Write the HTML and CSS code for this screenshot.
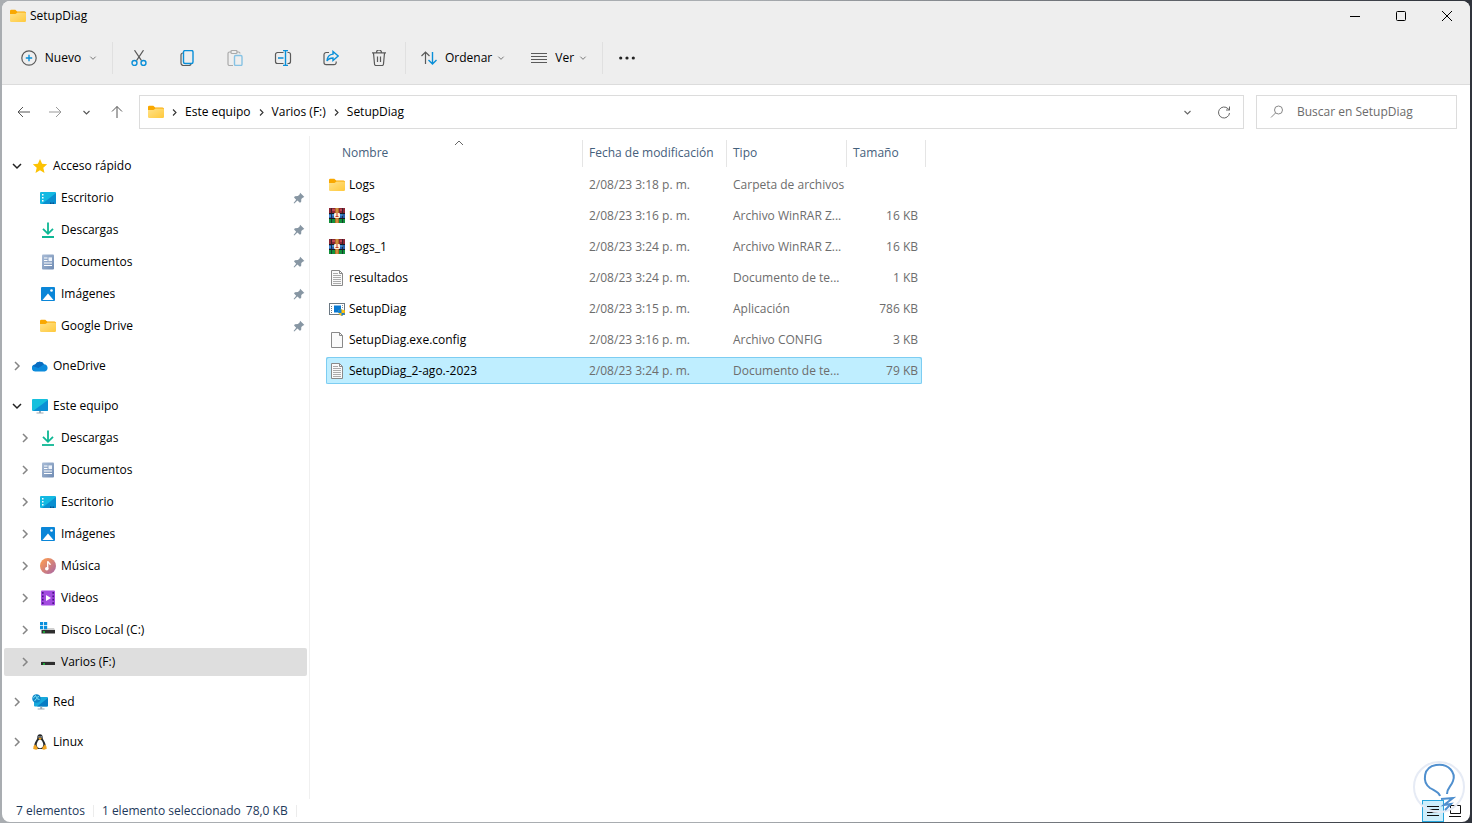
FILE: index.html
```html
<!DOCTYPE html>
<html lang="es">
<head>
	<meta charset="UTF-8">
	<meta name="viewport" content="width=device-width, initial-scale=1.0">
	<title>SetupDiag</title>
	<link rel="stylesheet" href="styles.css">
</head>
<body>
	<!-- Shared icons -->
	<svg class="sprite" aria-hidden="true">
		<defs>
			<linearGradient id="g-folder" x1="0" y1="0" x2="1" y2="1"><stop offset="0" stop-color="#ffe28a"/><stop offset="1" stop-color="#ffc93c"/></linearGradient>
			<linearGradient id="g-music" x1="0" y1="0" x2="1" y2="1"><stop offset=".2" stop-color="#f2955c"/><stop offset="1" stop-color="#a565a8"/></linearGradient>
			<linearGradient id="g-doc" x1="0" y1="0" x2="1" y2="1"><stop offset="0" stop-color="#a9bcd6"/><stop offset="1" stop-color="#6f8bb3"/></linearGradient>
			<symbol id="folder" viewBox="0 0 16 16">
				<path d="M0 3a1.3 1.3 0 0 1 1.3-1.3h4L7.2 3.500h7.300A1.500 1.500 0 0 1 16 5v4H0z" fill="#f9a800"/>
				<path d="M0 6h5.500l2-1.500h7.300A1.200 1.200 0 0 1 16 5.700v7.100a1.200 1.200 0 0 1-1.200 1.200H1.200A1.200 1.200 0 0 1 0 12.800z" fill="url(#g-folder)"/>
			</symbol>
			<symbol id="star" viewBox="0 0 16 16"><path d="M8 1l2.100 4.800 5.100.5-3.900 3.500 1.200 5.200L8 12.300 3.500 15l1.200-5.200L.8 6.300l5.100-.5z" fill="#fcc203"/></symbol>
			<symbol id="desktop" viewBox="0 0 16 16">
				<rect y="2" width="16" height="12" rx="1" fill="#14b9e2"/>
				<path d="M16 3v10a1 1 0 0 1-1 1H2z" fill="#0a8fd0"/>
				<path d="M2 4h1.500v1.500H2zM2 7h1.500v1.500H2zM2 10h1.500v1.500H2z" fill="#fff"/>
				<path d="M10 12.500h1.500V14H10zM12.500 12.500H14V14h-1.500z" fill="#07508c"/>
			</symbol>
			<symbol id="download" viewBox="0 0 16 16" fill="none" stroke="#0db794" stroke-width="1.800"><path d="M8 .5v11M3 6.800l5 5 5-5"/><path d="M2 15h12"/></symbol>
			<symbol id="documents" viewBox="0 0 16 16">
				<rect x="2" y="0.500" width="12" height="15" rx="1" fill="url(#g-doc)"/>
				<path d="M4 4h3.500M4 6.500h3.500M4 9h8M4 11.500h8" stroke="#fff" stroke-width="1.200"/><rect x="8.500" y="3.400" width="3.500" height="3.700" fill="#eef4fc"/>
			</symbol>
			<symbol id="pictures" viewBox="0 0 16 16">
				<rect x="1" y="1" width="14" height="14" rx="1" fill="#0a86d8"/>
				<path d="M2.500 14L8 7.500l5.500 6.500z" fill="#fff"/><circle cx="11.500" cy="4.500" r="1.300" fill="#fff"/>
			</symbol>
			<symbol id="pin" viewBox="0 0 14 14"><path d="M8.300 1l5 4.700-1.600.8-2 1.800-.2 3.400-1.500.8-2.800-2.700L1.500 13.500l-.8-.7 3-3.800-2.500-2.500 1-1.500 3.500-.2 2-1.900z" fill="#8796a3"/></symbol>
			<symbol id="cloud" viewBox="0 0 16 16"><path d="M3.500 13.500a3.500 3.500 0 0 1-.3-7A5 5 0 0 1 12 6.200a3.700 3.700 0 0 1 .7 7.300z" fill="#0c8bdc"/><path d="M3.200 6.500A5 5 0 0 1 12 6.200L6.500 10 1 8.200a3.400 3.400 0 0 1 2.200-1.700z" fill="#0a6cc0"/></symbol>
			<symbol id="computer" viewBox="0 0 16 16">
				<rect y="1" width="16" height="12" rx="1" fill="#16c0dd"/><path d="M16 2v10a1 1 0 0 1-1 1H1z" fill="#0b8fd5"/>
				<path d="M7 13h2v1.500h2.500v1h-7v-1H7z" fill="#9baab5"/>
			</symbol>
			<symbol id="music" viewBox="0 0 16 16"><circle cx="8" cy="8" r="8" fill="url(#g-music)"/><circle cx="6.800" cy="10.700" r="1.800" fill="#fff"/><path d="M7.700 10.800V3.300c.4 1.400 2.500 1.700 2.500 3.700" fill="none" stroke="#fff" stroke-width="1.300"/></symbol>
			<symbol id="videos" viewBox="0 0 16 16">
				<rect x="1" y="0.500" width="14" height="15" rx="1" fill="#a34be0"/>
				<path d="M2.800 2v12M13.200 2v12" stroke="#4a1585" stroke-width="1.600" stroke-dasharray="1.800 1.600"/><path d="M6 5l5 3-5 3z" fill="#fff"/>
			</symbol>
			<symbol id="drive" viewBox="0 0 16 16"><path d="M2 7h12l1 2H1z" fill="#c9c9c9"/><rect x="1" y="8" width="14" height="3" fill="#2e2e2e"/><path d="M3 10h2" stroke="#18c83c" stroke-width="1.400"/></symbol>
			<symbol id="drive-win" viewBox="0 0 16 16"><path d="M8 6h6l1 2H1.500z" fill="#cfcfcf"/><path d="M0 0h3.200v3.200H0zM4 0h3.200v3.200H4zM0 4h3.200v3.200H0zM4 4h3.200v3.200H4z" fill="#0a8fdc"/><rect x="1.500" y="8" width="13.500" height="3.500" fill="#2e2e2e"/><path d="M3 10h2" stroke="#18c83c" stroke-width="1.400"/></symbol>
			<symbol id="network" viewBox="0 0 16 16">
				<rect x="2" y="3" width="14" height="9.500" rx="1" fill="#17a9dc"/><path d="M16 4v7.500a1 1 0 0 1-1 1H5z" fill="#087cc4"/>
				<path d="M8.200 12.500h2v2h2.300v1H5.700v-1h2.500z" fill="#9baab5"/>
				<circle cx="4.500" cy="4.500" r="4.300" fill="#0f86c9"/><path d="M1 4.500l2.500-3 1 2L7 2.500M2.500 7l2-2.500 3 1" stroke="#7fe3f2" fill="none"/>
			</symbol>
			<symbol id="linux" viewBox="0 0 16 16">
				<path d="M8 .2c2 0 2.800 1.500 2.700 3.500 0 2 2.500 3.600 3 7.500L12 15H4l-1.700-3.800c.5-3.900 3-5.500 3-7.500C5.200 1.700 6 .2 8 .2z" fill="#24282c"/>
				<path d="M8 5.500c1.500 0 3.300 3 3.300 5.500 0 2-1.500 3.200-3.300 3.200S4.700 13 4.700 11C4.700 8.500 6.500 5.500 8 5.500z" fill="#fff"/>
				<path d="M6.300 4.500L8 3.500l1.800 1L8 5.900zM3.200 10.500l2.500 3.300c.5 1.200-.5 2-1.700 1.900l-2.800-.8.400-2.800zM12.800 10.500l-2.500 3.300c-.5 1.200.5 2 1.700 1.900l2.800-.9-.5-2.700z" fill="#f2a420"/>
				<path d="M6.500 2.300h1v1.200h-1zM8.600 2.300h1v1.200h-1z" fill="#fff"/>
			</symbol>
			<symbol id="rar" viewBox="0 0 16 16">
				<path d="M0 0h16v5.500H0z" fill="#8c2635"/><path d="M0 5.500h16v5H0z" fill="#2c5fae"/><path d="M0 10.500h16V15H0z" fill="#12903b"/>
				<path d="M0 5.500h16M0 10.500h16" stroke="#171922"/><path d="M2.500 0v15M13.500 0v15" stroke="#191c25" stroke-opacity=".7"/>
				<path d="M3 2h3M11 2h2" stroke="#ee6975"/><path d="M0 8h2M3 7h2M11 7h3" stroke="#51b6f0"/>
				<path d="M6 0h4v15H6z" fill="#b06a25"/><path d="M7.500 0h1v15h-1z" fill="#f0b35a"/>
				<rect x="5" y="5" width="6" height="5" rx="1" fill="#fff0da"/><path d="M8 5v3M6.500 8.500h3" stroke="#c43e2b"/>
			</symbol>
			<symbol id="text-file" viewBox="0 0 16 16"><path d="M2.500.5h8l3 3v12h-11z" fill="#fafafa" stroke="#898989"/><path d="M10.500.5v3h3" fill="none" stroke="#898989"/><path d="M4 3.500h5M4 5.500h8M4 7.500h8M4 9.500h8M4 11.500h8M4 13.500h8" stroke="#ababab"/></symbol>
			<symbol id="blank-file" viewBox="0 0 16 16"><path d="M2.500.5h8l3 3v12h-11z" fill="#fafafa" stroke="#898989"/><path d="M10.500.5v3h3" fill="none" stroke="#898989"/></symbol>
			<symbol id="app" viewBox="0 0 16 16">
				<rect x=".5" y="2.500" width="15" height="11" fill="#fff" stroke="#6b7883"/><path d="M2.500 5v7" stroke="#68747e" stroke-dasharray="1 1"/><rect x="5" y="4.500" width="7" height="7" fill="#0878d1"/><path d="M13.500 4v4" stroke="#89949c" stroke-dasharray="1 1"/>
				<path d="M9 9.500l3.500-1.300L16 9.500c0 3-1.500 4.600-3.500 5.500C10.500 14.100 9 12.500 9 9.500z" fill="#ffc20e"/><path d="M9 9.500l3.500-1.300v3.700H9.400c-.3-.7-.4-1.400-.4-2.400zM12.500 11.900h3.100c-.5 1.400-1.500 2.400-3.100 3.100z" fill="#1781d5"/>
			</symbol>
			<symbol id="right" viewBox="0 0 12 12"><path d="M4 2l4 4-4 4" fill="none" stroke="currentColor" stroke-width="1.500"/></symbol>
			<symbol id="down" viewBox="0 0 12 12"><path d="M2 4l4 4 4-4" fill="none" stroke="currentColor" stroke-width="1.500"/></symbol>
		</defs>
	</svg>

	<div class="window">
		<header class="titlebar">
			<svg class="icon"><use href="#folder"/></svg>
			<h1>SetupDiag</h1>
			<div class="window-buttons">
				<button type="button" aria-label="Minimizar"><svg class="icon" viewBox="0 0 16 16"><path d="M3 8.500h10"/></svg></button>
				<button type="button" aria-label="Maximizar"><svg class="icon" viewBox="0 0 16 16"><rect x="3.500" y="3.500" width="9" height="9" rx="1"/></svg></button>
				<button type="button" aria-label="Cerrar"><svg class="icon" viewBox="0 0 16 16"><path d="M3 3l10 10M13 3L3 13"/></svg></button>
			</div>
		</header>

		<div class="toolbar">
			<button type="button" class="tool tool-new">
				<svg class="icon" viewBox="0 0 16 16"><circle cx="8" cy="8" r="7.200"/><path class="blue" d="M8 4.800v6.400M4.800 8h6.400"/></svg>
				<span>Nuevo</span>
				<svg class="chevron"><use href="#down"/></svg>
			</button>
			<div class="tool-group">
				<button type="button" class="tool" aria-label="Cortar"><svg class="icon" viewBox="0 0 16 16"><path d="M3.500.2l7 10.500M12.500.2l-7 10.500"/><circle class="blue" cx="3.500" cy="13" r="2.500"/><circle class="blue" cx="12.500" cy="13" r="2.500"/></svg></button>
				<button type="button" class="tool" aria-label="Copiar"><svg class="icon" viewBox="0 0 16 16"><path d="M4 3a2 2 0 0 0-2 2v8a2.500 2.500 0 0 0 2.500 2.500H10a2 2 0 0 0 2-2"/><rect class="blue" x="4.500" y=".5" width="9.500" height="13" rx="1.500"/></svg></button>
				<button type="button" class="tool disabled" aria-label="Pegar" disabled><svg class="icon" viewBox="0 0 16 16"><path d="M6 15.500H2.500a1.500 1.500 0 0 1-1.500-1.500V3.500A1.500 1.500 0 0 1 2.500 2H4M10 2h1.500A1.500 1.500 0 0 1 13 3.500"/><rect x="4" y=".5" width="6" height="3" rx="1"/><rect class="blue" x="7.500" y="5.500" width="7.500" height="10" rx="1.200"/></svg></button>
				<button type="button" class="tool" aria-label="Cambiar nombre"><svg class="icon icon-wide" viewBox="0 0 18 16"><path d="M9.500 2.500h-6a2 2 0 0 0-2 2v7a2 2 0 0 0 2 2h6M13.500 2.500h1a2 2 0 0 1 2 2v7a2 2 0 0 1-2 2h-1"/><path class="blue" d="M11.500.5v15M9 .5h5M9 15.500h5M4 8h5.500"/></svg></button>
				<button type="button" class="tool" aria-label="Compartir"><svg class="icon" viewBox="0 0 16 16"><path d="M6 2.500H3.200A2.200 2.200 0 0 0 1 4.700v7.800a2.200 2.200 0 0 0 2.200 2.200H11a2.200 2.200 0 0 0 2.200-2.200v-1"/><path class="blue" d="M10 1.500l5.200 4.600L10 10.500V8c-3 0-4.800 1-6 3 .2-4 2-6.500 6-6.900z"/></svg></button>
				<button type="button" class="tool" aria-label="Eliminar"><svg class="icon" viewBox="0 0 16 16"><path d="M1 2.800h14M5.500 2.500a2.500 2.500 0 0 1 5 0M2.500 3l1 11a1.500 1.500 0 0 0 1.500 1.500h6a1.500 1.500 0 0 0 1.500-1.500l1-11M6.500 6.500v5.500M9.500 6.500v5.500"/></svg></button>
			</div>
			<div class="tool-group tool-menus">
				<button type="button" class="tool">
					<svg class="icon" viewBox="0 0 16 16"><path d="M4.500 14V2.200M.5 6l4-4 4 4"/><path class="blue" d="M11.500 2v11.800M7.500 10l4 4 4-4"/></svg>
					<span>Ordenar</span>
					<svg class="chevron"><use href="#down"/></svg>
				</button>
				<button type="button" class="tool">
					<svg class="icon" viewBox="0 0 16 16"><path d="M0 3.500h16M0 6.500h16M0 9.500h16M0 12.500h16"/></svg>
					<span>Ver</span>
					<svg class="chevron"><use href="#down"/></svg>
				</button>
			</div>
			<button type="button" class="tool tool-more" aria-label="Ver más"><svg class="icon" viewBox="0 0 16 16"><circle cx="1.700" cy="8" r="1.600"/><circle cx="8" cy="8" r="1.600"/><circle cx="14.300" cy="8" r="1.600"/></svg></button>
		</div>

		<div class="address-row">
			<div class="history">
				<button type="button" aria-label="Atrás"><svg class="icon" viewBox="0 0 16 16"><path d="M14 8H2M7 3L2 8l5 5"/></svg></button>
				<button type="button" class="faded" aria-label="Adelante"><svg class="icon" viewBox="0 0 16 16"><path d="M2 8h12M9 3l5 5-5 5"/></svg></button>
				<button type="button" class="recent" aria-label="Ubicaciones recientes"><svg class="chevron"><use href="#down"/></svg></button>
				<button type="button" aria-label="Subir"><svg class="icon" viewBox="0 0 16 16"><path d="M8 14V2.500M3 7.500l5-5 5 5"/></svg></button>
			</div>
			<nav class="address" aria-label="Ruta">
				<svg class="icon"><use href="#folder"/></svg>
				<svg class="separator"><use href="#right"/></svg>
				<a href="#">Este equipo</a>
				<svg class="separator"><use href="#right"/></svg>
				<a href="#">Varios (F:)</a>
				<svg class="separator"><use href="#right"/></svg>
				<a href="#">SetupDiag</a>
				<button type="button" class="address-more" aria-label="Ubicaciones anteriores"><svg class="chevron"><use href="#down"/></svg></button>
				<button type="button" aria-label="Actualizar"><svg class="icon" viewBox="0 0 16 16"><path d="M13.500 9A5.500 5.500 0 1 1 12 4.700L13.500 6M13.500 2.500V6H10"/></svg></button>
			</nav>
			<label class="search">
				<svg class="icon" viewBox="0 0 16 16"><circle cx="9.500" cy="6" r="4"/><path d="M6.500 9L2 13.500"/></svg>
				<input type="search" placeholder="Buscar en SetupDiag" aria-label="Buscar en SetupDiag">
			</label>
		</div>

		<div class="content">
			<nav class="sidebar" aria-label="Panel de navegación">
				<ul class="tree">
					<li>
						<a href="#" class="open"><svg class="chevron"><use href="#down"/></svg><svg class="icon"><use href="#star"/></svg>Acceso rápido</a>
						<ul>
							<li><a href="#"><span class="chevron"></span><svg class="icon"><use href="#desktop"/></svg>Escritorio<svg class="pin"><use href="#pin"/></svg></a></li>
							<li><a href="#"><span class="chevron"></span><svg class="icon"><use href="#download"/></svg>Descargas<svg class="pin"><use href="#pin"/></svg></a></li>
							<li><a href="#"><span class="chevron"></span><svg class="icon"><use href="#documents"/></svg>Documentos<svg class="pin"><use href="#pin"/></svg></a></li>
							<li><a href="#"><span class="chevron"></span><svg class="icon"><use href="#pictures"/></svg>Imágenes<svg class="pin"><use href="#pin"/></svg></a></li>
							<li><a href="#"><span class="chevron"></span><svg class="icon"><use href="#folder"/></svg>Google Drive<svg class="pin"><use href="#pin"/></svg></a></li>
						</ul>
					</li>
					<li><a href="#"><svg class="chevron"><use href="#right"/></svg><svg class="icon"><use href="#cloud"/></svg>OneDrive</a></li>
					<li>
						<a href="#" class="open"><svg class="chevron"><use href="#down"/></svg><svg class="icon"><use href="#computer"/></svg>Este equipo</a>
						<ul>
							<li><a href="#"><svg class="chevron"><use href="#right"/></svg><svg class="icon"><use href="#download"/></svg>Descargas</a></li>
							<li><a href="#"><svg class="chevron"><use href="#right"/></svg><svg class="icon"><use href="#documents"/></svg>Documentos</a></li>
							<li><a href="#"><svg class="chevron"><use href="#right"/></svg><svg class="icon"><use href="#desktop"/></svg>Escritorio</a></li>
							<li><a href="#"><svg class="chevron"><use href="#right"/></svg><svg class="icon"><use href="#pictures"/></svg>Imágenes</a></li>
							<li><a href="#"><svg class="chevron"><use href="#right"/></svg><svg class="icon"><use href="#music"/></svg>Música</a></li>
							<li><a href="#"><svg class="chevron"><use href="#right"/></svg><svg class="icon"><use href="#videos"/></svg>Videos</a></li>
							<li><a href="#"><svg class="chevron"><use href="#right"/></svg><svg class="icon"><use href="#drive-win"/></svg>Disco Local (C:)</a></li>
							<li><a href="#" class="current"><svg class="chevron"><use href="#right"/></svg><svg class="icon"><use href="#drive"/></svg>Varios (F:)</a></li>
						</ul>
					</li>
					<li><a href="#"><svg class="chevron"><use href="#right"/></svg><svg class="icon"><use href="#network"/></svg>Red</a></li>
					<li><a href="#"><svg class="chevron"><use href="#right"/></svg><svg class="icon"><use href="#linux"/></svg>Linux</a></li>
				</ul>
			</nav>

			<main class="files">
				<table>
					<colgroup><col class="col-name"><col class="col-date"><col class="col-type"><col class="col-size"><col class="col-end"></colgroup>
					<thead>
						<tr>
							<th>Nombre<svg class="sort" viewBox="0 0 10 6"><path d="M1 5l4-4 4 4"/></svg></th>
							<th>Fecha de modificación</th>
							<th>Tipo</th>
							<th>Tamaño</th>
							<td></td>
						</tr>
					</thead>
					<tbody>
						<tr><td><div class="name"><svg class="icon"><use href="#folder"/></svg>Logs</div></td><td>2/08/23 3:18 p. m.</td><td>Carpeta de archivos</td><td></td></tr>
						<tr><td><div class="name"><svg class="icon"><use href="#rar"/></svg>Logs</div></td><td>2/08/23 3:16 p. m.</td><td>Archivo WinRAR Z...</td><td>16 KB</td></tr>
						<tr><td><div class="name"><svg class="icon"><use href="#rar"/></svg>Logs_1</div></td><td>2/08/23 3:24 p. m.</td><td>Archivo WinRAR Z...</td><td>16 KB</td></tr>
						<tr><td><div class="name"><svg class="icon"><use href="#text-file"/></svg>resultados</div></td><td>2/08/23 3:24 p. m.</td><td>Documento de te...</td><td>1 KB</td></tr>
						<tr><td><div class="name"><svg class="icon"><use href="#app"/></svg>SetupDiag</div></td><td>2/08/23 3:15 p. m.</td><td>Aplicación</td><td>786 KB</td></tr>
						<tr><td><div class="name"><svg class="icon"><use href="#blank-file"/></svg>SetupDiag.exe.config</div></td><td>2/08/23 3:16 p. m.</td><td>Archivo CONFIG</td><td>3 KB</td></tr>
						<tr class="selected"><td><div class="name"><svg class="icon"><use href="#text-file"/></svg>SetupDiag_2-ago.-2023</div></td><td>2/08/23 3:24 p. m.</td><td>Documento de te...</td><td>79 KB</td></tr>
					</tbody>
				</table>
			</main>
		</div>

		<footer class="statusbar">
			<span class="status">7 elementos</span>
			<span class="status"><span>1 elemento seleccionado</span> <span>78,0 KB</span></span>
			<div class="views">
				<button type="button" class="active" aria-label="Detalles"><svg class="icon" viewBox="0 0 16 16"><path d="M2 3.500h12M2 6.500h12M2 9.500h12M2 12.500h12"/></svg></button>
				<button type="button" aria-label="Iconos grandes"><svg class="icon" viewBox="0 0 16 16"><path d="M3.500 2.500h10v8h-10zM2 13.500h12"/></svg></button>
			</div>
		</footer>

		<svg class="bulb" viewBox="0 0 52 52" aria-hidden="true">
			<circle cx="26" cy="26" r="25"/>
			<path d="M27 35c-1-4-5-5-10-8-8-6-7-21 6-23 13-2 20 8 17 16-2 6-6 7-6 13M28 38l12-1-9 7 7-1-6 6"/>
		</svg>
	</div>
</body>
</html>
```

FILE: styles.css
```css
* {
	box-sizing: border-box;
	padding: 0;
	margin: 0;
}

body {
	font-family: 'Open Sans', 'Noto Sans', sans-serif;
	font-size: 12px;
	line-height: 16px;
	color: #000;
	background: linear-gradient(to right, #a9adb1 50%, #30343c 98%);
}

button {
	font: inherit;
	color: inherit;
	background: none;
	border: none;
	display: flex;
	align-items: center;
	justify-content: center;
}

a {
	color: inherit;
	text-decoration: none;
}

ul {
	list-style: none;
}

svg {
	display: block;
	flex: none;
}

.sprite {
	position: absolute;
	width: 0;
	height: 0;
}

.icon {
	width: 16px;
	height: 16px;
	flex: none;
}

.icon-wide {
	width: 18px;
}

.chevron,
.separator {
	width: 12px;
	height: 12px;
	flex: none;
}

button .icon,
.search .icon {
	fill: none;
	stroke: currentColor;
}

.window {
	position: relative;
	display: flex;
	flex-direction: column;
	min-height: calc(100vh - 2px);
	margin: 1px 2px;
	background: #fff;
	border-radius: 8px;
	overflow: hidden;
}

/* Title bar */
.titlebar {
	display: flex;
	align-items: center;
	height: 30px;
	padding-left: 8px;
	gap: 4px;
	background: #eee;
}

.titlebar h1 {
	font-size: 12px;
	font-weight: 400;
}

.window-buttons {
	display: flex;
	margin-left: auto;
}

.window-buttons button {
	width: 46px;
	height: 28px;
}

/* Toolbar */
.toolbar {
	display: flex;
	align-items: center;
	height: 54px;
	background: #eee;
	border-bottom: 1px solid #dcdcdc;
}

.tool {
	height: 32px;
	min-width: 48px;
	gap: 8px;
}

.tool .icon {
	stroke: #5a5a5a;
	stroke-width: 1.2;
}

.tool .blue {
	stroke: #0a8fd8;
	stroke-width: 1.4;
}

.tool .chevron {
	width: 8px;
	height: 8px;
	color: #777;
}

.disabled .icon {
	opacity: 0.45;
}

.tool-new {
	width: 110px;
	padding-left: 4px;
}

.tool-group {
	display: flex;
	border-left: 1px solid #e0e0e0;
	border-right: 1px solid #e0e0e0;
	padding: 0 2px;
}

.tool-menus {
	border-left: none;
	padding: 0 15px;
	gap: 26px;
}

.tool-menus .chevron {
	margin-left: -3px;
}

.tool-more .icon {
	fill: #222;
	stroke: none;
}

/* Address bar */
.address-row {
	display: flex;
	align-items: center;
	gap: 12px;
	padding: 10px 13px 7px 8px;
}

.history {
	display: flex;
	width: 117px;
	justify-content: space-between;
	padding: 0 1px 0 5px;
	color: #555;
}

.history button {
	width: 18px;
	height: 28px;
}

.history .chevron,
.address .chevron,
.address .separator {
	width: 9px;
	height: 9px;
}

.faded {
	color: #999;
}

.address,
.search {
	display: flex;
	align-items: center;
	height: 34px;
	border: 1px solid #dcdcdc;
}

.address {
	flex: 1;
	gap: 5px;
	padding: 0 9px 0 8px;
}

.address .separator {
	color: #333;
	margin: 0 1px;
}

.address button {
	width: 20px;
	height: 28px;
	color: #666;
}

.address .address-more {
	margin-left: auto;
	margin-right: 12px;
}

.search {
	width: 201px;
	padding: 0 12px;
	gap: 12px;
	color: #888;
}

.search input {
	flex: 1;
	min-width: 0;
	font: inherit;
	border: none;
	outline: none;
	background: none;
}

.search input::placeholder {
	color: #6b6b6b;
	opacity: 1;
}

/* Navigation tree and file list */
.content {
	flex: 1;
	display: flex;
}

.sidebar {
	width: 308px;
	padding: 12px 2px 0;
	border-right: 1px solid #f0f0f0;
}

.tree > li {
	margin-bottom: 12px;
}

.tree a {
	display: flex;
	align-items: center;
	height: 28px;
	margin: 4px 0;
	padding-left: 7px;
	border-radius: 2px;
}

.tree ul a {
	padding-left: 15px;
}

.tree .chevron {
	color: #858585;
	margin-right: 9px;
}

.tree .open .chevron {
	color: #222;
}

.tree .icon {
	margin-right: 5px;
}

.tree .pin {
	width: 12px;
	height: 12px;
	margin-left: auto;
	margin-right: 2px;
}

.tree .current {
	background: #dedede;
}

.files {
	flex: 1;
	padding-left: 16px;
}

table {
	table-layout: fixed;
	width: 600px;
	border-spacing: 0 4px;
}

.col-name {
	width: 256px;
}

.col-date {
	width: 144px;
}

.col-type {
	width: 120px;
}

.col-size {
	width: 76px;
}

th {
	position: relative;
	height: 27px;
	padding-left: 6px;
	padding-bottom: 2px;
	font-weight: 400;
	text-align: left;
	color: #45607c;
	border-left: 1px solid #e5e5e5;
}

th:first-child {
	padding-left: 16px;
	border-left: none;
}

thead td {
	border-right: 1px solid #e5e5e5;
}

.sort {
	position: absolute;
	top: 0;
	left: 50%;
	width: 10px;
	height: 6px;
	fill: none;
	stroke: #666;
}

tbody td {
	height: 27px;
	padding-left: 7px;
	color: #6d6d6d;
	white-space: nowrap;
}

tbody td:first-child {
	padding-left: 3px;
	color: #000;
}

tbody td:nth-child(4) {
	padding-right: 4px;
	text-align: right;
}

.name {
	display: flex;
	align-items: center;
	gap: 4px;
}

.selected td {
	background: #bfeeff;
	box-shadow: inset 0 1px #7dcdf2, inset 0 -1px #7dcdf2;
}

.selected td:first-child {
	box-shadow: inset 1px 1px #7dcdf2, inset 0 -1px #7dcdf2;
	border-radius: 2px 0 0 2px;
}

.selected td:nth-child(4) {
	box-shadow: inset -1px 1px #7dcdf2, inset 0 -1px #7dcdf2;
	border-radius: 0 2px 2px 0;
}

/* Status bar */
.statusbar {
	display: flex;
	align-items: center;
	height: 23px;
	padding: 0 4px 0 6px;
	color: #1e395b;
}

.status {
	display: flex;
	gap: 5px;
	padding: 0 8px;
	line-height: 12px;
	border-right: 1px solid #ececec;
}

.views {
	display: flex;
	margin-left: auto;
	color: #111;
}

.views button {
	width: 22px;
	height: 22px;
}

.views .active {
	background: #cdeefb;
	border: 1px solid #26a5dc;
}

.bulb {
	position: absolute;
	right: 5px;
	bottom: 9px;
	width: 52px;
	height: 52px;
	fill: none;
	stroke: #4f8fce;
	stroke-width: 2;
	pointer-events: none;
}

.bulb circle {
	stroke: #e6ebf5;
}
```
